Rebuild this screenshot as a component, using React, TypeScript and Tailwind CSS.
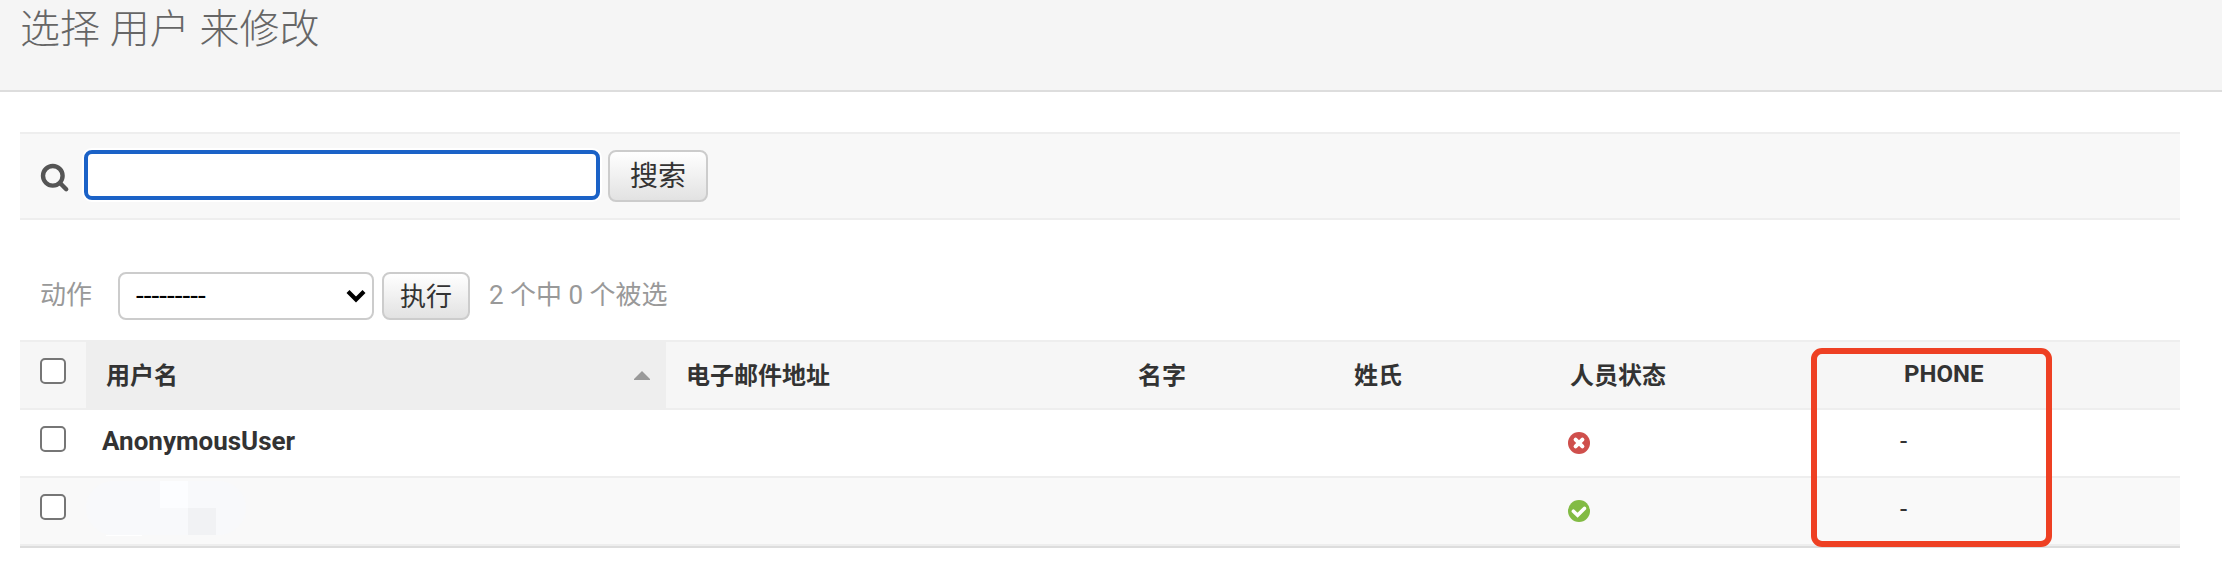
import React from "react";

const ROBOTO = "font-[Roboto,'Noto_Sans_CJK_SC',sans-serif]";

function SearchIcon() {
  return (
    <svg width="30" height="30" viewBox="0 0 30 30" fill="none" stroke="#555">
      <circle cx="12.8" cy="12.8" r="9.8" strokeWidth="4.4" />
      <path d="M20 20 L26.2 26.2" strokeWidth="4.4" strokeLinecap="round" />
    </svg>
  );
}

function NoIcon() {
  return (
    <svg width="22" height="22" viewBox="0 0 22 22">
      <circle cx="11" cy="11" r="11" fill="#cf4f4c" />
      <path d="M7.6 7.6 L14.4 14.4 M14.4 7.6 L7.6 14.4" stroke="#fff" strokeWidth="4" strokeLinecap="round" />
    </svg>
  );
}

function YesIcon() {
  return (
    <svg width="22" height="22" viewBox="0 0 22 22">
      <circle cx="11" cy="11" r="11" fill="#82bb44" />
      <path d="M5.4 11.2 L9.6 15.3 L16.4 8.4" fill="none" stroke="#fff" strokeWidth="3.6" strokeLinecap="round" />
    </svg>
  );
}

function Check() {
  return <div role="checkbox" aria-checked="false" className="h-[26px] w-[26px] rounded-[5px] border-2 border-[#767676] bg-white" />;
}

const COLS = "grid grid-cols-[66px_580px_452px_216px_216px_330px_300px]";

export default function App() {
  return (
    <div className={`h-[566px] w-[2222px] overflow-hidden bg-white text-[#333] ${ROBOTO}`}>
      <header className="h-[92px] border-b-2 border-[#ddd] bg-[#f5f5f5] pl-5">
        <h1 className="pt-[10px] text-[40px] leading-[40px] font-light text-[#666]">选择 用户 来修改</h1>
      </header>

      <main className="pt-10 pl-5">
        <div className="flex h-[88px] w-[2160px] items-start border-y-2 border-[#eee] bg-[#f8f8f8] pt-4 pl-5">
          <div className="w-11 pt-[13px]">
            <SearchIcon />
          </div>
          <div className="h-[50px] w-[516px] rounded-[8px] border-4 border-[#1b62c7] bg-white shadow-[0_0_0_2px_#fff]" />
          <button className="ml-2 h-[52px] w-[100px] rounded-[8px] border-2 border-[#ccc] bg-linear-to-b from-white to-[#e2e2e2] pt-[2px] text-[28px] leading-[44px]">
            搜索
          </button>
        </div>

        <div className="mt-[52px] flex h-12 items-center pl-5 text-[26px] leading-[44px] text-[#999]">
          <span className="w-[78px] pb-[2px]">动作</span>
          <div className="flex h-12 w-64 items-center justify-between rounded-[8px] border-2 border-[#ccc] bg-white pr-[6px] pl-4 text-[28px] text-black">
            <span>---------</span>
            <svg width="20" height="14" viewBox="0 0 20 14" fill="none" stroke="#000" strokeWidth="4.2">
              <path d="M2 2.5 L10 10.5 L18 2.5" />
            </svg>
          </div>
          <button className="ml-2 h-12 w-[88px] rounded-[8px] border-2 border-[#ccc] bg-linear-to-b from-white to-[#e2e2e2] pt-px text-[#333]">
            执行
          </button>
          <span className="ml-[19px] pb-[2px]">2 个中 0 个被选</span>
        </div>

        <section className="relative mt-5 w-[2160px] border-t-2 border-b-2 border-t-[#eee] border-b-[#ddd]">
          <div className={`${COLS} h-[68px] border-b-2 border-[#eee] bg-[#f6f6f6] text-[24px] leading-[36px] font-bold`}>
            <div className="pt-4 pl-5"><Check /></div>
            <div className="flex justify-between bg-[#eee] pt-4 pr-4 pl-5">
              <span>用户名</span>
              <svg className="mt-[13px]" width="16" height="9" viewBox="0 0 16 9">
                <path d="M8 0 L16 8 V9 H0 V8 Z" fill="#999" />
              </svg>
            </div>
            <div className="pt-4 pl-5">电子邮件地址</div>
            <div className="pt-4 pl-5">名字</div>
            <div className="pt-4 pl-5">姓氏</div>
            <div className="pt-4 pl-5">人员状态</div>
            <div className="pt-[14px] pl-6">PHONE</div>
          </div>
          <div className={`${COLS} h-[68px] border-b-2 border-[#eee] bg-white text-[26px] leading-[36px]`}>
            <div className="pt-4 pl-5"><Check /></div>
            <div className="pt-[13px] pl-4 font-bold">AnonymousUser</div>
            <div />
            <div />
            <div />
            <div className="pt-[22px] pl-[18px]"><NoIcon /></div>
            <div className="pt-[13px] pl-5">-</div>
          </div>
          <div className={`${COLS} h-[68px] border-b-2 border-[#eee] bg-[#f9f9f9] text-[26px] leading-[36px]`}>
            <div className="pt-4 pl-5"><Check /></div>
            <div className="pt-[3px]">
              <div className="grid h-[54px] w-[160px] grid-cols-[28px_28px] grid-rows-[27px_27px] rounded-[28px] bg-[#f8f9fb] pl-[74px]">
                <div className="bg-[#fcfdff]" />
                <div />
                <div />
                <div className="bg-[#f1f2f4]" />
              </div>
              <div className="ml-5 h-px w-9 bg-white" />
            </div>
            <div />
            <div />
            <div />
            <div className="pt-[22px] pl-[18px]"><YesIcon /></div>
            <div className="pt-[13px] pl-5">-</div>
          </div>
          <div className="absolute top-[6px] left-[1791px] h-[199px] w-[241px] rounded-[11px] border-[6px] border-[#ee4023]" />
        </section>
      </main>
    </div>
  );
}
